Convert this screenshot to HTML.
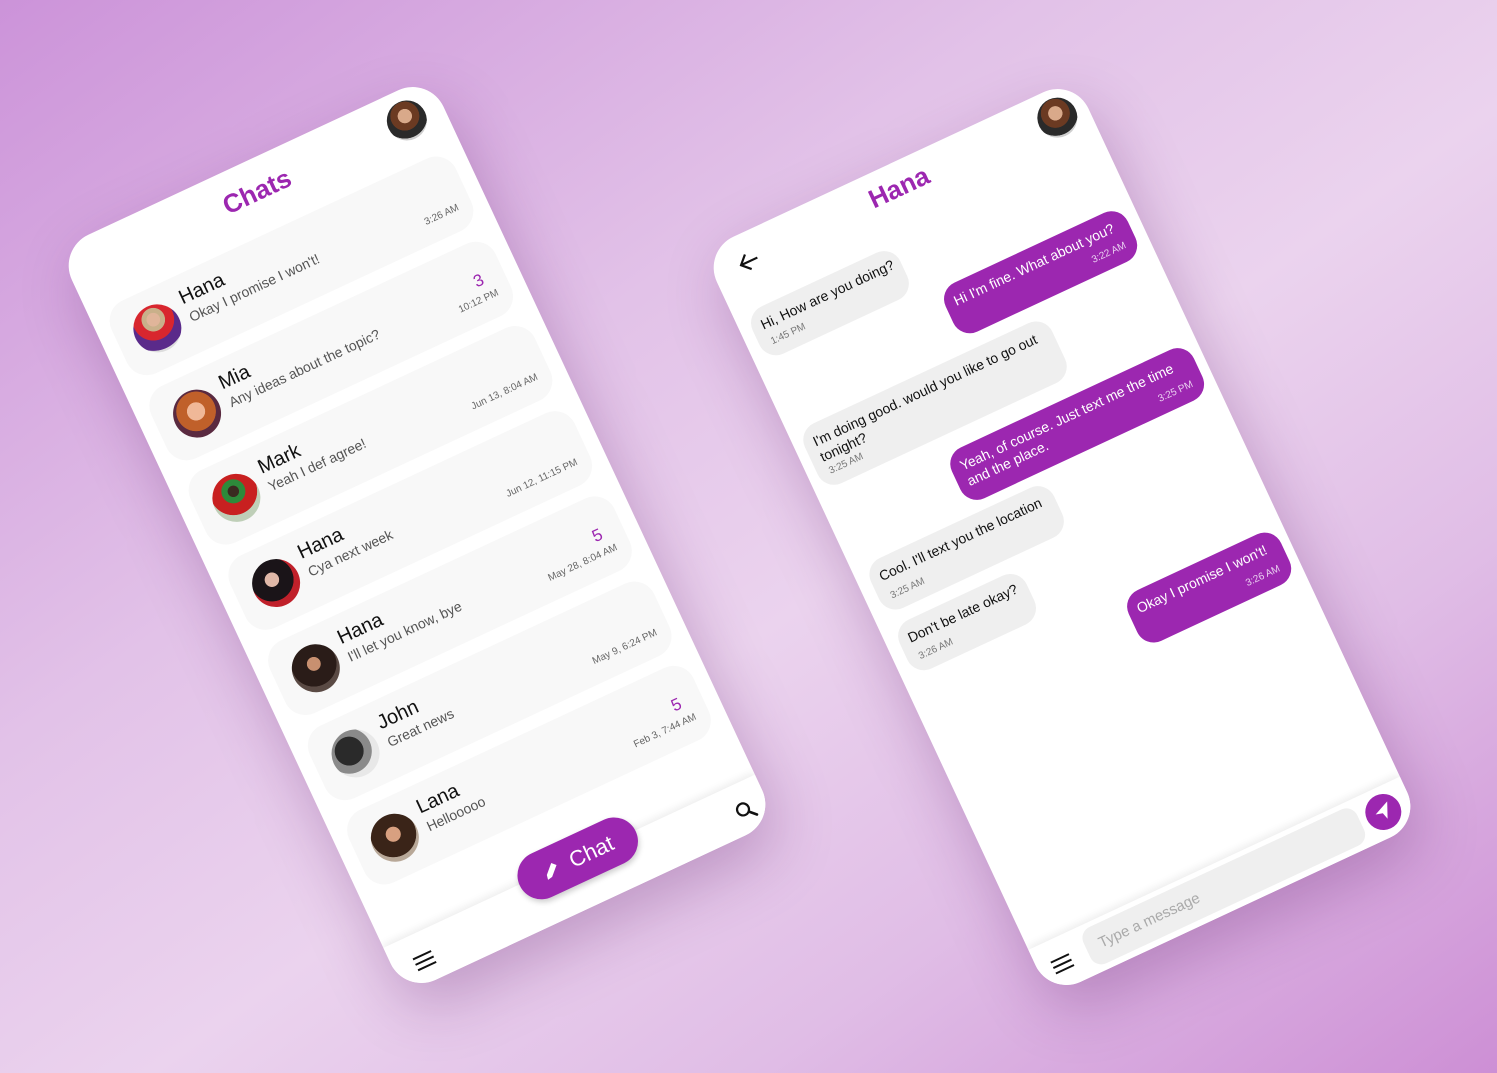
<!DOCTYPE html>
<html><head><meta charset="utf-8">
<style>
*{margin:0;padding:0;box-sizing:border-box}
html,body{width:1497px;height:1073px;overflow:hidden}
body{position:relative;font-family:"Liberation Sans",sans-serif;
background:linear-gradient(to bottom right,#cc93d9 0%,#e2c2e8 35%,#ebd3ee 55%,#e0bde6 75%,#cd8fd5 100%);}
.phone{position:absolute;width:410px;height:822px;background:#fff;border-radius:34px;transform:rotate(-25deg);transform-origin:50% 50%;box-shadow:0 24px 60px rgba(90,20,100,.28);overflow:hidden}
.title{position:absolute;left:0;width:100%;text-align:center;color:#9c27b0;font-weight:bold;font-size:26px;line-height:36px}
.av{position:absolute;border-radius:50%;overflow:hidden}
.card{position:absolute;left:15px;width:380px;height:80px;background:#f8f8f8;border-radius:22px}
.card .av{left:18px;top:16px;width:48px;height:48px}
.card .nm{position:absolute;left:75px;top:12px;font-size:20px;line-height:22px;color:#111}
.card .ms{position:absolute;left:76px;top:36px;font-size:14px;line-height:17px;color:#555}
.card .tm{position:absolute;right:14px;top:52px;font-size:10px;color:#666}
.card .bd{position:absolute;right:22px;top:29px;font-size:17px;color:#9c27b0}
.bar{position:absolute;left:0;top:771px;width:410px;height:60px;background:#fff;box-shadow:0 -3px 8px rgba(0,0,0,.07)}
.fab{position:absolute;left:150px;top:748px;width:128px;height:48px;border-radius:24px;background:#9c27b0;color:#fff;font-size:22px;line-height:48px;padding-left:56px;box-shadow:0 3px 6px rgba(0,0,0,.2)}
.b{position:absolute;border-radius:18px;font-size:14px;line-height:17px;padding:9px 10px;white-space:nowrap}
.r{background:#efefef;color:#111}
.s{background:#9c27b0;color:#fff}
.b .t{position:absolute;font-size:10px;bottom:7px}
.r .t{left:12px;color:#777}
.s .t{right:12px;color:#ead0f0}
.ham{position:absolute;width:20px;height:14px}
.ham i{display:block;height:2px;background:#111;margin-bottom:4px}
</style></head><body>

<div class="phone" style="left:212px;top:124px">
  <div class="title" style="top:14px">Chats</div>
  <div class="av" style="left:351px;top:11px;width:40px;height:40px;background:radial-gradient(circle at 50% 38%,#d9a98a 0 22%,#6b3a22 23% 45%,#2a2a2a 46% 70%,#cfcfcf 71%)"></div>

  <div class="card" style="top:74px"><div class="av" style="background:radial-gradient(circle at 50% 30%,#e0b59a 0 16%,#c9b08a 17% 28%,#d8262e 29% 50%,#5a2a8a 51% 75%,#ddd 76%)"></div><div class="nm">Hana</div><div class="ms">Okay I promise I won't!</div><div class="tm">3:26 AM</div></div>
  <div class="card" style="top:168px"><div class="av" style="background:radial-gradient(circle at 50% 45%,#f0b898 0 25%,#c0602a 26% 55%,#5a2a40 56%)"></div><div class="nm">Mia</div><div class="ms">Any ideas about the topic?</div><div class="bd">3</div><div class="tm">10:12 PM</div></div>
  <div class="card" style="top:261px"><div class="av" style="background:radial-gradient(circle at 50% 35%,#3a2a20 0 14%,#2d8a3a 15% 30%,#c82020 31% 60%,#bfcfb8 61%)"></div><div class="nm">Mark</div><div class="ms">Yeah I def agree!</div><div class="tm">Jun 13, 8:04 AM</div></div>
  <div class="card" style="top:355px"><div class="av" style="background:radial-gradient(circle at 45% 40%,#e0b8a8 0 18%,#1a1418 19% 55%,#c0202a 56% 75%,#20181a 76%)"></div><div class="nm">Hana</div><div class="ms">Cya next week</div><div class="tm">Jun 12, 11:15 PM</div></div>
  <div class="card" style="top:449px"><div class="av" style="background:radial-gradient(circle at 50% 40%,#c89070 0 18%,#2a1c18 19% 60%,#5a4a44 61%)"></div><div class="nm">Hana</div><div class="ms">I'll let you know, bye</div><div class="bd">5</div><div class="tm">May 28, 8:04 AM</div></div>
  <div class="card" style="top:543px"><div class="av" style="background:radial-gradient(circle at 40% 40%,#2a2a2a 0 35%,#8a8a8a 36% 55%,#e8e8e8 56%)"></div><div class="nm">John</div><div class="ms">Great news</div><div class="tm">May 9, 6:24 PM</div></div>
  <div class="card" style="top:636px"><div class="av" style="background:radial-gradient(circle at 50% 42%,#d8a080 0 20%,#3a2418 21% 62%,#b8a898 63%)"></div><div class="nm">Lana</div><div class="ms">Hellooooo</div><div class="bd">5</div><div class="tm">Feb 3, 7:44 AM</div></div>

  <div class="bar">
    <div class="ham" style="left:22px;top:22px"><i></i><i></i><i></i></div>
    <svg style="position:absolute;left:376px;top:18px" width="22" height="22" viewBox="0 0 22 22"><circle cx="8.5" cy="8.5" r="6" fill="none" stroke="#111" stroke-width="2.2"/><line x1="13" y1="13" x2="19" y2="19" stroke="#111" stroke-width="2.6" stroke-linecap="round"/></svg>
  </div>
  <div class="fab"><svg style="position:absolute;left:24px;top:13px" width="22" height="22" viewBox="0 0 22 22"><path d="M4 18 L5 13 L14 4 L18 8 L9 17 Z" fill="#fff"/></svg>Chat</div>
</div>

<div class="phone" style="left:857px;top:126px">
  <div class="title" style="top:7px">Hana</div>
  <svg style="position:absolute;left:26px;top:18px" width="24" height="22" viewBox="0 0 24 22"><path d="M21 11 H4 M11 3 L3 11 L11 19" fill="none" stroke="#111" stroke-width="2.2"/></svg>
  <div class="av" style="left:358px;top:9px;width:40px;height:40px;background:radial-gradient(circle at 50% 38%,#d9a98a 0 22%,#6b3a22 23% 45%,#2a2a2a 46% 70%,#cfcfcf 71%)"></div>

  <div class="b r" style="left:12px;top:75px;width:163px;height:52px">Hi, How are you doing?<span class="t">1:45 PM</span></div>
  <div class="b s" style="left:197px;top:135px;width:201px;height:54px">Hi I'm fine. What about you?<span class="t">3:22 AM</span></div>
  <div class="b r" style="left:10px;top:203px;width:273px;height:66px">I'm doing good. would you like to go out<br>tonight?<span class="t">3:25 AM</span></div>
  <div class="b s" style="left:133px;top:287px;width:267px;height:56px">Yeah, of course. Just text me the time<br>and the place.<span class="t">3:25 PM</span></div>
  <div class="b r" style="left:13px;top:353px;width:202px;height:55px">Cool. I'll text you the location<span class="t">3:25 AM</span></div>
  <div class="b r" style="left:13px;top:421px;width:140px;height:54px">Don't be late okay?<span class="t">3:26 AM</span></div>
  <div class="b s" style="left:233px;top:491px;width:168px;height:56px">Okay I promise I won't!<span class="t">3:26 AM</span></div>

  <div class="bar">
    <div class="ham" style="left:15px;top:20px"><i></i><i></i><i></i></div>
    <div style="position:absolute;left:53px;top:5px;width:302px;height:40px;border-radius:12px;background:#efefef;color:#aaa;font-size:15px;line-height:40px;padding-left:14px">Type a message</div>
    <div style="position:absolute;left:362px;top:7px;width:36px;height:36px;border-radius:50%;background:#9c27b0">
      <svg style="position:absolute;left:8px;top:8px" width="20" height="20" viewBox="0 0 20 20"><path d="M2 9 L18 2 L11 18 L9 11 Z" fill="#fff"/></svg>
    </div>
  </div>
</div>
</body></html>
